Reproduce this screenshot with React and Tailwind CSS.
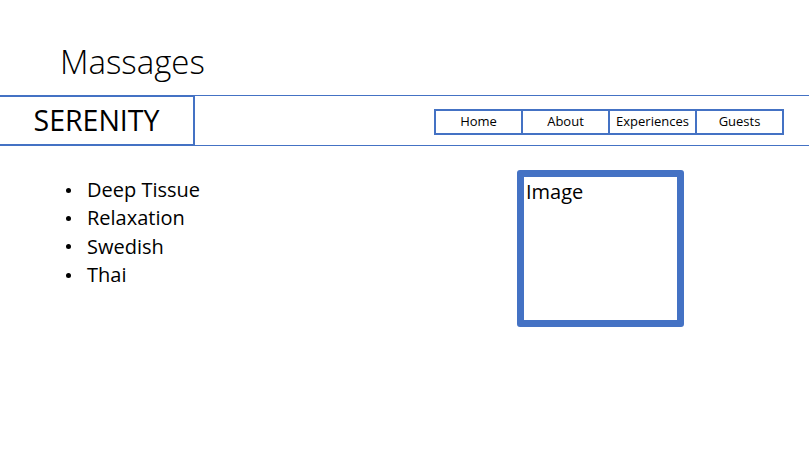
import React from 'react'

const navItems = ['Home', 'About', 'Experiences', 'Guests']
const massages = ['Deep Tissue', 'Relaxation', 'Swedish', 'Thai']

const App = () => {
  return (
    <div className="w-[809px] h-[454px] bg-white text-black overflow-hidden font-['Open_Sans',sans-serif]">
      {/* Title */}
      <div className="h-[95px] pl-[60px] pt-[42px]">
        <h1 className="text-[33px] leading-[40px] font-light">Massages</h1>
      </div>

      {/* Header bar */}
      <div className="flex items-start justify-between h-[51px] border-y border-[#4472c4]">
        <div className="-my-px h-[51px] w-[195px] flex items-center justify-center border-y-2 border-r-2 border-[#4472c4]">
          <span className="text-[28.5px] leading-none">SERENITY</span>
        </div>
        <nav className="flex mt-[13px] mr-[25px]">
          {navItems.map((item, i) => (
            <div
              key={item}
              className={`w-[89px] h-[26px] flex items-center justify-center border-2 border-[#4472c4] text-[13px] ${i > 0 ? '-ml-[2px]' : ''}`}
            >
              {item}
            </div>
          ))}
        </nav>
      </div>

      {/* Content */}
      <div className="flex items-start">
        <ul className="w-[517px] pl-[66px] pt-[30px]">
          {massages.map((m) => (
            <li key={m} className="flex items-center text-[20px] leading-[28.3px]">
              <span className="w-[21px] flex items-center">
                <span className="block w-[5px] h-[5px] rounded-full bg-black" />
              </span>
              <span>{m}</span>
            </li>
          ))}
        </ul>
        <div className="mt-[24px] w-[167px] h-[157px] border-[7px] border-[#4472c4] rounded-[3px] pl-[2px] pt-[3px]">
          <span className="block text-[20px] leading-[24px]">Image</span>
        </div>
      </div>
    </div>
  )
}

export default App
